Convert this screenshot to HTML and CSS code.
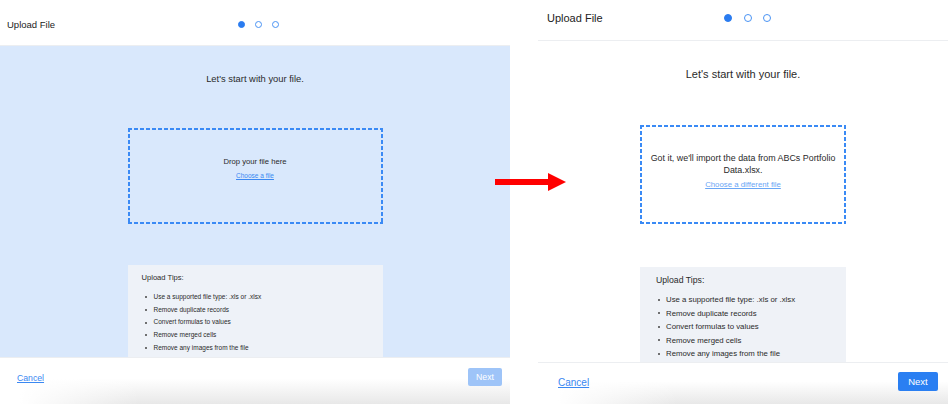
FILE: index.html
```html
<!DOCTYPE html>
<html>
<head>
    <meta charset="UTF-8">
    <title>Upload File - before / after</title>
    <link rel="stylesheet" href="styles.css">
</head>
<body>
    <div class="page">
        <!-- Step 1: nothing chosen yet -->
        <section class="panel panel-a">
            <div class="panel-head">
                <span class="panel-title">Upload File</span>
                <div class="steps">
                    <span class="dot active"></span>
                    <span class="dot"></span>
                    <span class="dot"></span>
                </div>
                <span></span>
            </div>
            <div class="panel-body">
                <p class="lead">Let's start with your file.</p>
                <div class="drop">
                    <p class="drop-text">Drop your file here</p>
                    <a href="#" class="drop-link">Choose a file</a>
                </div>
                <div class="tips">
                    <p class="tips-title">Upload Tips:</p>
                    <ul>
                        <li>Use a supported file type: .xls or .xlsx</li>
                        <li>Remove duplicate records</li>
                        <li>Convert formulas to values</li>
                        <li>Remove merged cells</li>
                        <li>Remove any images from the file</li>
                    </ul>
                </div>
            </div>
            <div class="panel-foot">
                <a href="#" class="cancel">Cancel</a>
                <button class="next" disabled>Next</button>
            </div>
        </section>

        <div class="spacer"></div>

        <!-- Step 1: file picked -->
        <section class="panel panel-b">
            <div class="panel-head">
                <span class="panel-title">Upload File</span>
                <div class="steps">
                    <span class="dot active"></span>
                    <span class="dot"></span>
                    <span class="dot"></span>
                </div>
                <span></span>
            </div>
            <div class="panel-body">
                <p class="lead">Let's start with your file.</p>
                <div class="drop">
                    <p class="drop-text">Got it, we'll import the data from ABCs Portfolio Data.xlsx.</p>
                    <a href="#" class="drop-link">Choose a different file</a>
                </div>
                <div class="tips">
                    <p class="tips-title">Upload Tips:</p>
                    <ul>
                        <li>Use a supported file type: .xls or .xlsx</li>
                        <li>Remove duplicate records</li>
                        <li>Convert formulas to values</li>
                        <li>Remove merged cells</li>
                        <li>Remove any images from the file</li>
                    </ul>
                </div>
            </div>
            <div class="panel-foot">
                <a href="#" class="cancel">Cancel</a>
                <button class="next">Next</button>
            </div>
        </section>

        <!-- red arrow laid over both panels -->
        <svg class="arrow" width="72" height="20" viewBox="0 0 72 20">
            <rect x="0" y="7" width="54" height="6" fill="#ff0000"/>
            <polygon points="53,1 71,10 53,19" fill="#ff0000"/>
        </svg>
    </div>
</body>
</html>
```

FILE: styles.css
```css
body {
    margin: 0;
    font-family: "Liberation Sans", Arial, sans-serif;
    color: #2a2a2a;
    background-color: #fff;
}

p {
    margin: 0;
}

.page {
    display: flex;
    height: 404px;
    width: 948px;
    position: relative;
    overflow: hidden;
}

.panel {
    display: flex;
    flex-direction: column;
    height: 100%;
}

.spacer {
    width: 28px;
}

.panel-head {
    display: grid;
    grid-template-columns: 1fr auto 1fr;
    align-items: center;
    box-sizing: border-box;
    border-bottom: 1px solid #eceef1;
}

.panel-title {
    color: #222;
}

.steps {
    display: flex;
}

.dot {
    box-sizing: border-box;
    border-radius: 50%;
    border: 1.6px solid #4a93f4;
}

.dot.active {
    background-color: #2a7cf0;
    border-color: #2a7cf0;
}

.panel-body {
    flex: 1;
    overflow: hidden;
    display: flex;
    flex-direction: column;
    align-items: center;
}

.lead {
    text-align: center;
}

.drop {
    box-sizing: border-box;
    text-align: center;
    /* short dashes, the default dashed border is too long */
    background:
        repeating-linear-gradient(90deg, #3a8af5 0 4px, transparent 4px 6px) top / 100% 2px no-repeat,
        repeating-linear-gradient(90deg, #3a8af5 0 4px, transparent 4px 6px) bottom / 100% 2px no-repeat,
        repeating-linear-gradient(180deg, #3a8af5 0 4px, transparent 4px 6px) left / 2px 100% no-repeat,
        repeating-linear-gradient(180deg, #3a8af5 0 4px, transparent 4px 6px) right / 2px 100% no-repeat;
}

.drop-link {
    display: block;
    color: #3a88f2;
}

.tips {
    box-sizing: border-box;
    flex: 1 0 auto;
}

.tips ul {
    list-style: none;
    margin: 0;
    padding: 0;
}

.tips li {
    display: flex;
    align-items: center;
}

.tips li::before {
    content: "";
    width: 2px;
    height: 2px;
    border-radius: 50%;
    background-color: #444;
    flex-shrink: 0;
}

.panel-foot {
    display: flex;
    justify-content: space-between;
    align-items: center;
    box-sizing: border-box;
    border-top: 1px solid #eceef1;
    background:
        linear-gradient(to right, #fff 20px, rgba(255, 255, 255, 0) 140px),
        linear-gradient(to bottom, #fff 45%, #e8e8e8 100%);
}

.cancel {
    color: #3a88f2;
}

.next {
    font-family: inherit;
    color: #fff;
    background-color: #2a7ff2;
    border: none;
    border-radius: 2px;
    padding: 0;
}

.next:disabled {
    background-color: #9ec4f8;
}

.arrow {
    position: absolute;
    left: 495px;
    top: 172px;
}

/* ---- left shot (smaller scale) ---- */
.panel-a {
    width: 510px;
}

.panel-a .panel-head {
    height: 46px;
    padding: 4px 0 0 7px;
}

.panel-a .panel-title {
    font-size: 9.5px;
}

.panel-a .steps {
    gap: 9.5px;
}

.panel-a .dot {
    width: 7.5px;
    height: 7.5px;
}

.panel-a .panel-body {
    background-color: #d9e8fc;
    padding-top: 27px;
}

.panel-a .lead {
    font-size: 9.4px;
    line-height: 12px;
}

.panel-a .drop {
    margin-top: 43px;
    width: 255px;
    height: 96px;
    padding-top: 29px;
}

.panel-a .drop-text {
    font-size: 7.7px;
    line-height: 10px;
}

.panel-a .drop-link {
    font-size: 6.5px;
    line-height: 9px;
    margin-top: 4px;
}

.panel-a .tips {
    margin-top: 41px;
    width: 255px;
    padding: 8px 14px 0;
    background-color: #eef2f8;
}

.panel-a .tips-title {
    font-size: 7.6px;
    line-height: 10px;
}

.panel-a .tips ul {
    margin-top: 8px;
}

.panel-a .tips li {
    font-size: 6.5px;
    line-height: 12.7px;
    padding-left: 3px;
}

.panel-a .tips li::before {
    margin-right: 7px;
}

.panel-a .panel-foot {
    height: 47px;
    padding: 0 8px 0 17px;
}

.panel-a .cancel {
    font-size: 8.7px;
    margin-top: -7px;
}

.panel-a .next {
    width: 34px;
    height: 18px;
    font-size: 8.7px;
    margin-top: -9px;
}

/* ---- right shot (larger scale) ---- */
.panel-b {
    width: 410px;
}

.panel-b .panel-head {
    height: 41px;
    padding: 0 0 4px 9px;
}

.panel-b .panel-title {
    font-size: 11px;
}

.panel-b .steps {
    gap: 11.5px;
}

.panel-b .dot {
    width: 8px;
    height: 8px;
}

.panel-b .panel-body {
    padding-top: 26px;
}

.panel-b .lead {
    font-size: 11px;
    line-height: 14px;
}

.panel-b .drop {
    margin-top: 44px;
    width: 206px;
    height: 99px;
    padding: 28px 3px 0;
}

.panel-b .drop-text {
    font-size: 8.9px;
    line-height: 11.5px;
}

.panel-b .drop-link {
    font-size: 7.8px;
    line-height: 10px;
    margin-top: 4px;
    color: #6aa6f5;
}

.panel-b .tips {
    margin-top: 43px;
    width: 206px;
    padding: 8px 16px 0;
    background-color: #eff2f7;
}

.panel-b .tips-title {
    font-size: 8.7px;
    line-height: 11px;
}

.panel-b .tips ul {
    margin-top: 7px;
}

.panel-b .tips li {
    font-size: 7.8px;
    line-height: 13.5px;
    padding-left: 2px;
}

.panel-b .tips li::before {
    margin-right: 6px;
}

.panel-b .panel-foot {
    height: 42px;
    padding: 0 10px 0 20px;
}

.panel-b .cancel {
    font-size: 10px;
    margin-top: -2px;
}

.panel-b .next {
    width: 40px;
    height: 19px;
    font-size: 9.5px;
    margin-top: -4px;
}
```
